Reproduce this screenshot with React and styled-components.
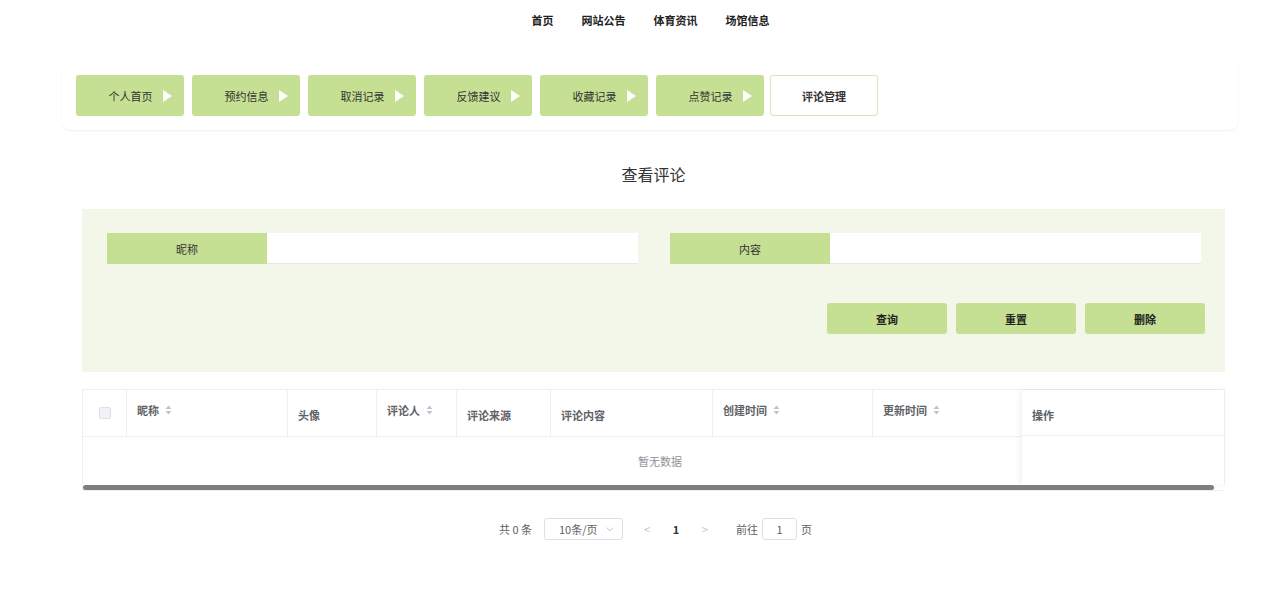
import React from 'react';
import styled, { createGlobalStyle } from 'styled-components';

const GlobalStyle = createGlobalStyle`
  body {
    margin: 0;
    background: #fff;
    font-family: "Noto Sans CJK SC", "Noto Sans", sans-serif;
    color: #333;
  }
`;

const Page = styled.div`
  width: 1271px;
  min-height: 593px;
`;

const TopNav = styled.nav`
  height: 40px;
  display: flex;
  justify-content: center;
  align-items: center;
  gap: 28px;
  padding-left: 30px;
  font-size: 11px;
  font-weight: bold;
  color: #222;
`;

const NavItem = styled.span`
  cursor: pointer;
`;

const TabBar = styled.div`
  margin: 25px 33px 0 62px;
  padding: 10px 14px 14px;
  display: flex;
  gap: 8px;
  border-radius: 0 0 8px 8px;
  box-shadow: 0 1px 2px rgba(0, 0, 0, 0.07);
`;

const Tab = styled.div`
  height: ${p => (p.$active ? '39px' : '41px')};
  width: ${p => (p.$active ? '106px' : '88px')};
  box-sizing: content-box;
  display: flex;
  align-items: center;
  justify-content: center;
  gap: 10px;
  padding-left: ${p => (p.$active ? '0' : '20px')};
  margin-left: ${p => (p.$active ? '-2px' : '0')};
  border-radius: 3px;
  font-size: 11px;
  background: ${p => (p.$active ? '#fff' : '#c5df93')};
  border: ${p => (p.$active ? '1px solid #d6e6b8' : 'none')};
  font-weight: ${p => (p.$active ? 'bold' : 'normal')};
  color: #333;
`;

const Arrow = styled.span`
  width: 0;
  height: 0;
  border-top: 6.5px solid transparent;
  border-bottom: 6.5px solid transparent;
  border-left: 9px solid #fff;
`;

const Main = styled.main`
  margin: 0 46px 0 82px;
`;

const Title = styled.h2`
  margin: 32px 0 23px;
  font-size: 16px;
  line-height: 24px;
  font-weight: normal;
  text-align: center;
  color: #333;
`;

const SearchPanel = styled.section`
  background: #f3f7ea;
  padding: 24px 20px 38px 25px;
`;

const FieldRow = styled.div`
  display: grid;
  grid-template-columns: 531px 531px;
  gap: 32px;
`;

const Field = styled.div`
  display: flex;
  height: 31px;
`;

const FieldLabel = styled.div`
  width: 160px;
  flex: none;
  background: #c5df93;
  display: flex;
  align-items: center;
  justify-content: center;
  font-size: 11px;
  color: #333;
`;

const FieldInput = styled.input`
  flex: 1;
  border: none;
  border-bottom: 1px solid #e1e7ea;
  background: #fff;
  outline: none;
  padding: 0 10px;
`;

const ButtonRow = styled.div`
  display: flex;
  justify-content: flex-end;
  gap: 9px;
  margin-top: 39px;
`;

const ActionButton = styled.button`
  width: 120px;
  height: 31px;
  border: none;
  border-radius: 3px;
  background: #c5df93;
  font-family: inherit;
  font-size: 11px;
  font-weight: bold;
  color: #222;
`;

const TableWrap = styled.div`
  position: relative;
  margin-top: 17px;
  border: 1px solid #ebeef5;
  border-right: none;
`;

const cols = '44px 161px 89px 80px 94px 162px 160px 150px 202px';

const HeaderRow = styled.div`
  display: grid;
  grid-template-columns: ${cols};
  height: 46px;
  border-bottom: 1px solid #ebeef5;
`;

const HeadCell = styled.div`
  display: flex;
  align-items: ${p => (p.$sortable ? 'flex-start' : 'center')};
  padding: ${p => (p.$sortable ? '12px 10px 0' : '4px 10px 0')};
  gap: 6px;
  font-size: 11px;
  font-weight: bold;
  color: #606266;
  border-right: 1px solid #ebeef5;
  box-sizing: border-box;
`;

const CheckCell = styled.div`
  display: flex;
  align-items: center;
  justify-content: center;
  border-right: 1px solid #ebeef5;
`;

const CheckBox = styled.span`
  width: 10px;
  height: 10px;
  border: 1px solid #dcdfe6;
  border-radius: 2px;
  background: #f0f2f8;
`;

const EmptyRow = styled.div`
  height: 48px;
  display: flex;
  align-items: center;
  justify-content: center;
  font-size: 11px;
  color: #909399;
  padding-left: 12px;
`;

const FixedColumn = styled.div`
  position: absolute;
  top: 0;
  right: 0;
  width: 202px;
  height: 95px;
  background: #fff;
  box-shadow: -2px 0 6px rgba(0, 0, 0, 0.06);
  border-right: 1px solid #ebeef5;
`;

const FixedHead = styled.div`
  height: 46px;
  display: flex;
  align-items: center;
  padding: 4px 10px 0;
  box-sizing: border-box;
  font-size: 11px;
  font-weight: bold;
  color: #606266;
  border-bottom: 1px solid #ebeef5;
`;

const ScrollBar = styled.div`
  position: relative;
  height: 5px;
  margin-right: 11px;
  border-radius: 3px;
  background: #7f7f7f;
`;

const Pagination = styled.div`
  display: flex;
  justify-content: center;
  align-items: center;
  margin-top: 27px;
  font-size: 11px;
  color: #606266;
  padding-left: 4px;
`;

const Total = styled.span`
  margin-right: 12px;
`;

const SizeSelect = styled.div`
  width: 79px;
  height: 22px;
  box-sizing: border-box;
  border: 1px solid #dcdfe6;
  border-radius: 3px;
  display: flex;
  align-items: center;
  justify-content: space-between;
  padding: 0 8px 0 14px;
  color: #606266;
  margin-right: 14px;
`;

const PageArrow = styled.span`
  color: #c0c4cc;
  font-size: 11px;
  width: 20px;
  text-align: center;
`;

const PageNum = styled.span`
  font-weight: bold;
  color: #303133;
  margin: 0 12px;
  width: 14px;
  text-align: center;
`;

const Jumper = styled.span`
  display: flex;
  align-items: center;
  margin-left: 21px;
  gap: 4px;
`;

const JumpInput = styled.div`
  width: 35px;
  height: 22px;
  box-sizing: border-box;
  border: 1px solid #dcdfe6;
  border-radius: 3px;
  display: flex;
  align-items: center;
  justify-content: center;
  color: #606266;
`;

const SortIcon = () => (
  <svg width="7" height="10" viewBox="0 0 7 10" style={{ marginTop: 3 }}>
    <path d="M3.5 0.5 L6.5 4 L0.5 4 Z" fill="#c0c4cc" />
    <path d="M3.5 9.5 L6.5 6 L0.5 6 Z" fill="#c0c4cc" />
  </svg>
);

const ChevronDown = () => (
  <svg width="8" height="5" viewBox="0 0 8 5">
    <path d="M0.5 0.5 L4 4 L7.5 0.5" fill="none" stroke="#c0c4cc" strokeWidth="0.9" />
  </svg>
);

const tabs = ['个人首页', '预约信息', '取消记录', '反馈建议', '收藏记录', '点赞记录'];

const columns = [
  { title: '昵称', sortable: true },
  { title: '头像' },
  { title: '评论人', sortable: true },
  { title: '评论来源' },
  { title: '评论内容' },
  { title: '创建时间', sortable: true },
  { title: '更新时间', sortable: true },
];

export default function App() {
  return (
    <Page>
      <GlobalStyle />
      <TopNav>
        <NavItem>首页</NavItem>
        <NavItem>网站公告</NavItem>
        <NavItem>体育资讯</NavItem>
        <NavItem>场馆信息</NavItem>
      </TopNav>

      <TabBar>
        {tabs.map(t => (
          <Tab key={t}>
            {t}
            <Arrow />
          </Tab>
        ))}
        <Tab $active>评论管理</Tab>
      </TabBar>

      <Main>
        <Title>查看评论</Title>

        <SearchPanel>
          <FieldRow>
            <Field>
              <FieldLabel>昵称</FieldLabel>
              <FieldInput />
            </Field>
            <Field>
              <FieldLabel>内容</FieldLabel>
              <FieldInput />
            </Field>
          </FieldRow>
          <ButtonRow>
            <ActionButton>查询</ActionButton>
            <ActionButton>重置</ActionButton>
            <ActionButton>删除</ActionButton>
          </ButtonRow>
        </SearchPanel>

        <TableWrap>
          <HeaderRow>
            <CheckCell>
              <CheckBox />
            </CheckCell>
            {columns.map(c => (
              <HeadCell key={c.title} $sortable={c.sortable}>
                {c.title}
                {c.sortable && <SortIcon />}
              </HeadCell>
            ))}
            <HeadCell>操作</HeadCell>
          </HeaderRow>
          <EmptyRow>暂无数据</EmptyRow>
          <FixedColumn>
            <FixedHead>操作</FixedHead>
          </FixedColumn>
          <ScrollBar />
        </TableWrap>

        <Pagination>
          <Total>共 0 条</Total>
          <SizeSelect>
            10条/页
            <ChevronDown />
          </SizeSelect>
          <PageArrow>&lt;</PageArrow>
          <PageNum>1</PageNum>
          <PageArrow>&gt;</PageArrow>
          <Jumper>
            前往
            <JumpInput>1</JumpInput>
            页
          </Jumper>
        </Pagination>
      </Main>
    </Page>
  );
}
